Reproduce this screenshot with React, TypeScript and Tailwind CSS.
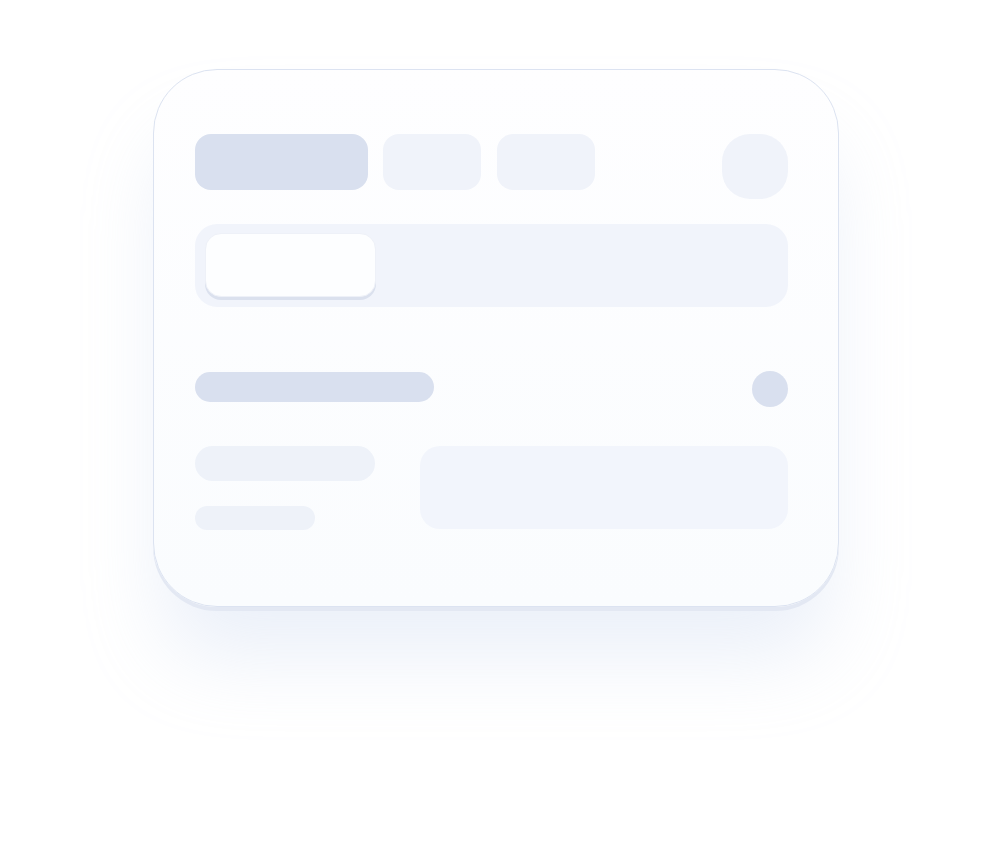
export default function App() {
  return (
    <div className="min-h-[848px] w-full bg-white pt-[69px]">
      <div className="mx-auto flex h-[538px] w-[686px] flex-col rounded-[64px] border border-[#dce3f1] bg-gradient-to-b from-[#fefeff] to-[#fafcfe] pl-[41px] pr-[50px] pt-[64px] shadow-[0_4px_0_#e3e8f3,0_60px_80px_-10px_rgba(190,205,235,0.3)]">
        {/* top tabs */}
        <div className="flex items-start gap-[15px]">
          <div className="h-[56px] w-[173px] rounded-[16px] bg-[#d9e0ef]" />
          <div className="h-[56px] w-[98px] rounded-[16px] bg-[#f0f3fa]" />
          <div className="ml-px h-[56px] w-[98px] rounded-[16px] bg-[#f0f3fa]" />
          <div className="ml-auto h-[65px] w-[66px] rounded-[28px] bg-[#f0f3fa]" />
        </div>

        {/* segmented control */}
        <div className="mt-[25px] flex h-[83px] items-start rounded-[22px] bg-[#f1f4fb] pl-[10px] pt-[9px]">
          <div className="h-[64px] w-[171px] rounded-[16px] border border-[#eef1f8] bg-[#fdfeff] shadow-[0_3px_0_#dbe1ee]" />
        </div>

        {/* title row */}
        <div className="mt-[64px] flex items-start justify-between">
          <div className="mt-px h-[30px] w-[239px] rounded-full bg-[#d9e0ef]" />
          <div className="h-[36px] w-[36px] rounded-full bg-[#d9e0ef]" />
        </div>

        {/* content row */}
        <div className="mt-[39px] flex items-start gap-[45px]">
          <div className="flex w-[180px] flex-col gap-[25px]">
            <div className="h-[35px] w-[180px] rounded-full bg-[#eef2f9]" />
            <div className="h-[24px] w-[120px] rounded-full bg-[#eef2f9]" />
          </div>
          <div className="h-[83px] flex-1 rounded-[20px] bg-[#f2f5fc]" />
        </div>
      </div>
    </div>
  );
}
